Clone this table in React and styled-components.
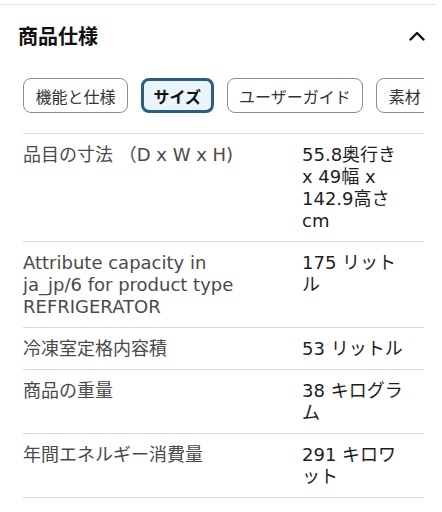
import React from "react";
import styled, { createGlobalStyle } from "styled-components";

const GlobalStyle = createGlobalStyle`
  html, body { margin: 0; padding: 0; background: #fff; }
  body {
    font-family: "Liberation Sans", "Noto Sans CJK JP", sans-serif;
    -webkit-font-smoothing: antialiased;
  }
`;

const Page = styled.div`
  width: 442px;
  padding-top: 4px;
`;

const TopRule = styled.div`
  width: 436px;
  height: 1px;
  background: #e0e0e0;
`;

const Header = styled.div`
  display: flex;
  align-items: center;
  justify-content: space-between;
  height: 62px;
  padding: 0 17px 0 18px;
`;

const Title = styled.h2`
  margin: 0;
  font-family: "Noto Sans CJK JP", sans-serif;
  font-weight: 700;
  font-size: 20px;
  line-height: 24px;
  color: #111;
`;

const ToggleIcon = styled.svg`
  width: 16px;
  height: 10px;
  display: block;
`;

const Body = styled.div`
  width: 401px;
  padding: 11px 0 0 23px;
`;

const ChipRow = styled.div`
  display: flex;
  gap: 13px;
  overflow: hidden;
  padding-bottom: 20px;
`;

const Chip = styled.button`
  flex: none;
  height: 35px;
  box-sizing: border-box;
  padding: 0 ${(p) => (p.$active ? "9.5px" : "11.5px")};
  border-radius: 8px;
  border: ${(p) => (p.$active ? "3px solid #2b5c83" : "1px solid #8c8c8c")};
  background: ${(p) => (p.$active ? "#e9f4fb" : "#fff")};
  font-family: "Noto Sans CJK JP", sans-serif;
  font-size: 16px;
  font-weight: ${(p) => (p.$active ? 700 : 400)};
  color: ${(p) => (p.$active ? "#111" : "#333")};
  line-height: 1;
  cursor: pointer;
`;

const SpecTable = styled.div`
  border-top: 1px solid #d9d9d9;
`;

const SpecRow = styled.div`
  display: grid;
  grid-template-columns: 235px 104px;
  column-gap: 44px;
  padding: 10px 0 9px;
  border-bottom: 1px solid #d9d9d9;
  font-family: "DejaVu Sans", "Noto Sans CJK JP", sans-serif;
  font-size: 18px;
  line-height: 22px;
`;

const Label = styled.div`
  color: #4a4a4a;
`;

const Value = styled.div`
  color: #1e1e1e;
`;

const specs = [
  ["品目の寸法 （D x W x H)", "55.8奥行き x 49幅 x 142.9高さ cm"],
  ["Attribute capacity in ja_jp/6 for product type REFRIGERATOR", "175 リットル"],
  ["冷凍室定格内容積", "53 リットル"],
  ["商品の重量", "38 キログラム"],
  ["年間エネルギー消費量", "291 キロワット"],
];

const chips = ["機能と仕様", "サイズ", "ユーザーガイド", "素材・お手入れ"];

export default function App() {
  return (
    <>
      <GlobalStyle />
      <Page>
        <TopRule />
        <Header>
          <Title>商品仕様</Title>
          <ToggleIcon viewBox="0 0 16 10" aria-hidden="true">
            <polyline
              points="1.5,8.5 8,2 14.5,8.5"
              fill="none"
              stroke="#111"
              strokeWidth="2.4"
              strokeLinecap="round"
              strokeLinejoin="round"
            />
          </ToggleIcon>
        </Header>
        <Body>
          <ChipRow>
            {chips.map((c, i) => (
              <Chip key={c} $active={i === 1}>
                {c}
              </Chip>
            ))}
          </ChipRow>
          <SpecTable>
            {specs.map(([k, v]) => (
              <SpecRow key={k}>
                <Label>{k}</Label>
                <Value>{v}</Value>
              </SpecRow>
            ))}
          </SpecTable>
        </Body>
      </Page>
    </>
  );
}
